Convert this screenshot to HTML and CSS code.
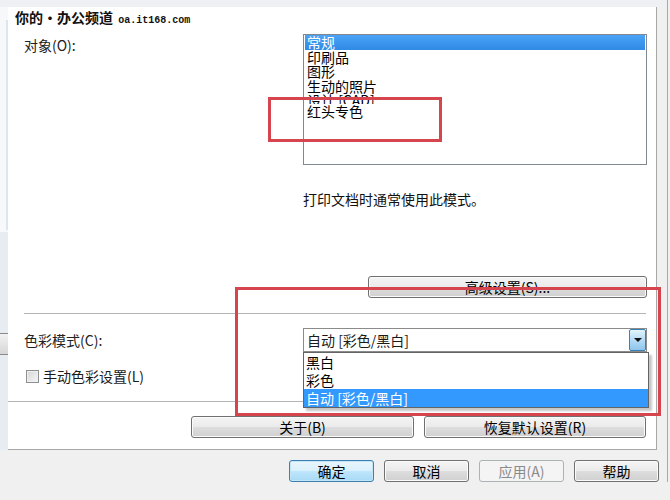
FILE: index.html
```html
<!DOCTYPE html>
<html>
<head>
    <meta charset="utf-8">
    <title>打印机首选项 - 色彩</title>
    <link rel="stylesheet" href="styles.css">
</head>
<body>
    <div class="window">
        <div class="top-strip"></div>

        <div class="left-strip">
            <span class="left-bar"></span>
            <span class="left-stub"></span>
        </div>

        <div class="panel">
            <div class="watermark">你的·办公频道 <span class="wm-url">oa.it168.com</span></div>

            <div class="row row-object">
                <div class="label">对象(O):</div>
                <div class="control">
                    <div class="listbox">
                        <div class="item selected">常规</div>
                        <div class="item">印刷品</div>
                        <div class="item">图形</div>
                        <div class="item">生动的照片</div>
                        <div class="item clipped">设计 [CAD]</div>
                        <div class="item">红头专色</div>
                    </div>
                    <p class="hint">打印文档时通常使用此模式。</p>
                    <div class="adv-row">
                        <button class="btn btn-adv">高级设置(S)...</button>
                    </div>
                </div>
            </div>

            <div class="sep"></div>

            <div class="row row-color">
                <div class="label">色彩模式(C):</div>
                <div class="control">
                    <div class="combo">
                        <span class="combo-text">自动 [彩色/黑白]</span>
                        <span class="combo-arrow"></span>
                        <div class="dropdown">
                            <div class="dd-item">黑白</div>
                            <div class="dd-item">彩色</div>
                            <div class="dd-item selected">自动 [彩色/黑白]</div>
                        </div>
                    </div>
                </div>
            </div>

            <div class="check-row">
                <span class="checkbox"></span>
                <span>手动色彩设置(L)</span>
            </div>

            <div class="sep sep-wide"></div>

            <div class="btn-row">
                <button class="btn btn-about">关于(B)</button>
                <button class="btn btn-reset">恢复默认设置(R)</button>
            </div>

            <!-- red highlight frames drawn over the dialog -->
            <div class="mark mark-list"></div>
            <div class="mark mark-color"></div>
        </div>

        <div class="right-gap"></div>
        <div class="right-edge"></div>

        <div class="footer">
            <button class="btn btn-foot btn-default">确定</button>
            <button class="btn btn-foot">取消</button>
            <button class="btn btn-foot" disabled>应用(A)</button>
            <button class="btn btn-foot">帮助</button>
        </div>
    </div>
</body>
</html>
```

FILE: styles.css
```css
body {
    margin: 0;
    padding: 0;
    background-color: #f0f0f0;
    color: #1a1a1a;
    font-family: "Noto Sans CJK SC", "Liberation Sans", sans-serif;
    font-size: 14px;
}

.window {
    display: grid;
    grid-template-columns: 8px 649px 10px 3px;
    grid-template-rows: 7px 443px 50px;
    width: 670px;
    height: 500px;
    overflow: hidden;
}

.top-strip {
    grid-column: 1 / 4;
    grid-row: 1;
    background-color: #eef0f3;
}

.left-strip {
    grid-column: 1;
    grid-row: 2;
    position: relative;
    background: linear-gradient(#f7f8fa 0, #f7f8fa 225px, #e6ecf2 225px);
}

.left-bar {
    position: absolute;
    left: 6px;
    top: 13px;
    width: 3px;
    height: 210px;
    background-color: #dde6f0;
}

.left-stub {
    position: absolute;
    left: -4px;
    top: 326px;
    width: 13px;
    height: 20px;
    border: 1px solid #8a8a8a;
    border-radius: 3px;
    background: linear-gradient(#f2f2f2, #d6d6d6);
}

.panel {
    grid-column: 2;
    grid-row: 2;
    position: relative;
    display: flex;
    flex-direction: column;
    box-sizing: border-box;
    padding: 27px 10px 0 16px;
    background-color: white;
    border-right: 1px solid #a7a7a7;
    border-bottom: 1px solid #a7a7a7;
    z-index: 1;
}

.right-gap {
    grid-column: 3;
    grid-row: 2;
    background-color: #f0f0f0;
}

.right-edge {
    grid-column: 4;
    grid-row: 1 / 4;
    border-left: 1px solid #a9a9a9;
    background-color: #f0f0f0;
    margin-bottom: 18px;
}

.watermark {
    position: absolute;
    left: 7px;
    top: 3px;
    font-size: 14px;
    font-weight: bold;
    line-height: 15px;
    color: #111;
    text-shadow: 1px 0 0 #fff, -1px 0 0 #fff, 0 1px 0 #fff, 0 -1px 0 #fff;
    z-index: 5;
}

.wm-url {
    font-family: "Liberation Mono", monospace;
    font-size: 10px;
    margin-left: 2px;
}

.row {
    display: grid;
    grid-template-columns: 279px 344px;
}

.label {
    line-height: 20px;
    color: #222;
}

.row-object .label {
    padding-top: 1px;
}

.row-color {
    margin-top: 14px;
}

.row-color .label {
    line-height: 24px;
}

.listbox {
    box-sizing: border-box;
    height: 131px;
    border: 1px solid #828790;
    padding: 0 1px;
    background-color: white;
}

.item {
    height: 14.5px;
    line-height: 14.5px;
    padding-left: 2px;
    white-space: nowrap;
    color: #000;
}

.item.selected {
    background: linear-gradient(#4aa3f5, #2f8ae6);
    color: white;
}

.item.clipped {
    height: 11px;
    overflow: hidden;
}

.hint {
    margin: 24px 0 0;
    line-height: 20px;
    color: #111;
}

.adv-row {
    display: flex;
    justify-content: flex-end;
    margin-top: 67px;
}

.btn {
    box-sizing: border-box;
    height: 22px;
    padding: 0;
    border: 1px solid #707070;
    border-radius: 3px;
    background: linear-gradient(#f4f4f4 0%, #ebebeb 48%, #dddddd 52%, #d0d0d0 100%);
    box-shadow: inset 0 0 0 1px #fbfbfb;
    font-family: "Noto Sans CJK SC", sans-serif;
    font-size: 14px;
    line-height: 20px;
    color: #000;
}

.btn-adv {
    width: 279px;
}

.sep {
    height: 1px;
    margin-top: 15px;
    background-color: #b5b5b5;
}

.sep-wide {
    margin-left: -16px;
}

.combo {
    position: relative;
    box-sizing: border-box;
    height: 24px;
    border: 1px solid #8b8b8b;
    display: flex;
    align-items: center;
    background-color: white;
}

.combo-text {
    padding-left: 3px;
    flex: 1;
    line-height: 22px;
}

.combo-arrow {
    position: relative;
    box-sizing: border-box;
    width: 17px;
    height: 22px;
    border: 1px solid #3c7fb1;
    border-radius: 2px;
    background: linear-gradient(#e3f3fd, #b3dbf6 50%, #8fc5ec);
}

.combo-arrow::after {
    content: "";
    position: absolute;
    left: 4px;
    top: 8px;
    border-left: 4px solid transparent;
    border-right: 4px solid transparent;
    border-top: 4px solid #111;
}

.dropdown {
    position: absolute;
    left: -1px;
    top: 23px;
    box-sizing: border-box;
    width: 346px;
    border: 1px solid #646464;
    background-color: white;
    box-shadow: 3px 3px 2px rgba(0, 0, 0, 0.22);
    z-index: 3;
}

.dd-item {
    height: 18px;
    line-height: 18px;
    padding-left: 2px;
    color: #000;
}

.dd-item.selected {
    background-color: #3399ff;
    color: white;
}

.check-row {
    display: flex;
    align-items: center;
    height: 20px;
    margin-top: 14px;
    padding-left: 2px;
}

.checkbox {
    box-sizing: border-box;
    width: 13px;
    height: 13px;
    margin-right: 4px;
    border: 1px solid #8e8f8f;
    background: linear-gradient(135deg, #d6d6d6, #f6f6f6);
    box-shadow: inset 0 0 0 1px #f0f0f0;
}

.btn-row {
    display: flex;
    justify-content: flex-end;
    gap: 10px;
    margin-top: 14px;
}

.btn-about {
    width: 223px;
}

.btn-reset {
    width: 222px;
}

.mark {
    position: absolute;
    box-sizing: border-box;
    border: 3px solid #d6454d;
    z-index: 4;
}

.mark-list {
    left: 260px;
    top: 90px;
    width: 174px;
    height: 45px;
}

.mark-color {
    left: 227px;
    top: 280px;
    width: 426px;
    height: 129px;
}

.footer {
    grid-column: 1 / 4;
    grid-row: 3;
    display: flex;
    justify-content: flex-end;
    align-items: flex-start;
    gap: 10px;
    padding: 10px 8px 0 0;
    background-color: #f0f0f0;
}

.btn-foot {
    width: 85px;
}

.btn-default {
    border-color: #3c7fb1;
    background: linear-gradient(#eaf6fd 0%, #d9f0fc 48%, #bee6fd 52%, #a7d9f5 100%);
    box-shadow: inset 0 0 0 1px #c4e5f6;
}

.btn-foot:disabled {
    border-color: #adb2b5;
    background: #f4f4f4;
    box-shadow: none;
    color: #8a8a8a;
}
```
